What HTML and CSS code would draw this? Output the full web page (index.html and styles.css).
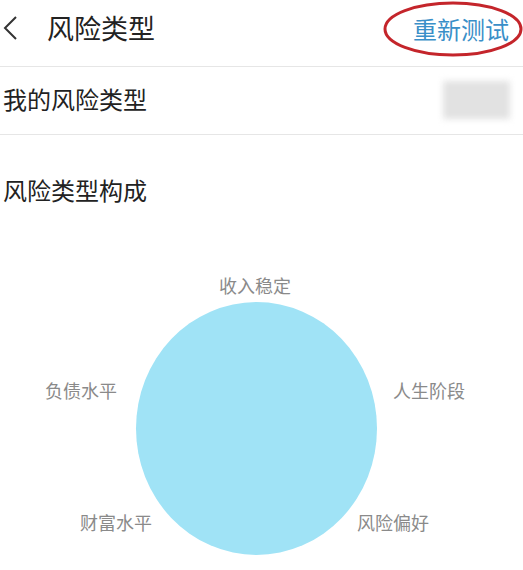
FILE: index.html
```html
<!DOCTYPE html>
<html lang="zh">
<head>
<meta charset="utf-8">
<link rel="stylesheet" href="styles.css">
</head>
<body>
<header class="topbar">
  <div class="left">
    <svg class="back" width="16" height="26" viewBox="0 0 16 26"><path d="M14 2 L3 13 L14 24" fill="none" stroke="#333" stroke-width="2"/></svg>
    <span class="title">风险类型</span>
  </div>
  <div class="retest">
    <span class="retest-text">重新测试</span>
    <svg class="ring" width="142" height="58" viewBox="0 0 142 58"><ellipse cx="71" cy="29" rx="68" ry="26" fill="none" stroke="#c4252b" stroke-width="3"/></svg>
  </div>
</header>
<div class="row">
  <span class="row-label">我的风险类型</span>
  <span class="blur"></span>
</div>
<div class="section-title">风险类型构成</div>
<div class="chart">
  <div class="pie"></div>
  <span class="lbl l-top">收入稳定</span>
  <span class="lbl l-left">负债水平</span>
  <span class="lbl l-right">人生阶段</span>
  <span class="lbl l-bl">财富水平</span>
  <span class="lbl l-br">风险偏好</span>
</div>
</body>
</html>
```
FILE: styles.css
```css
* { box-sizing: border-box; }
body {
  margin: 0;
  background: #fff;
  font-family: "Noto Sans CJK SC", "Noto Sans", sans-serif;
  color: #222;
  width: 523px;
  height: 570px;
  overflow: hidden;
}
.topbar {
  height: 67px;
  border-bottom: 1px solid #e6e6e6;
  display: flex;
  align-items: center;
  justify-content: space-between;
}
.left {
  display: flex;
  align-items: center;
  padding-left: 2px;
  margin-top: -10px;
}
.back { display: block; }
.title {
  font-size: 27px;
  line-height: 36px;
  margin-left: 29px;
  color: #222;
}
.retest {
  position: relative;
  width: 142px;
  height: 58px;
  margin-top: -9px;
  margin-right: -1px;
  display: flex;
  align-items: center;
  justify-content: flex-end;
  padding-right: 15px;
}
.retest-text {
  font-size: 24px;
  line-height: 30px;
  color: #3a8fc8;
}
.ring {
  position: absolute;
  left: 0;
  top: 0;
}
.row {
  height: 68px;
  border-bottom: 1px solid #e6e6e6;
  display: flex;
  align-items: center;
  justify-content: space-between;
  padding: 0 13px 0 3px;
}
.row-label {
  font-size: 24px;
  line-height: 30px;
  margin-top: -3px;
}
.blur {
  width: 67px;
  height: 38px;
  background: #e2e2e2;
  filter: blur(3px);
  margin-top: -1px;
}
.section-title {
  font-size: 24px;
  line-height: 30px;
  padding: 40px 0 0 3px;
  height: 115px;
}
.chart {
  position: relative;
  height: 320px;
}
.pie {
  position: absolute;
  left: 136px;
  top: 52px;
  width: 241px;
  height: 253px;
  border-radius: 50%;
  background: #a0e3f6;
}
.lbl {
  position: absolute;
  font-size: 18px;
  line-height: 24px;
  color: #8a8a8a;
  white-space: nowrap;
}
.l-top { left: 219px; top: 23px; }
.l-left { left: 45px; top: 128px; }
.l-right { left: 393px; top: 128px; }
.l-bl { left: 80px; top: 260px; }
.l-br { left: 357px; top: 260px; }
```
